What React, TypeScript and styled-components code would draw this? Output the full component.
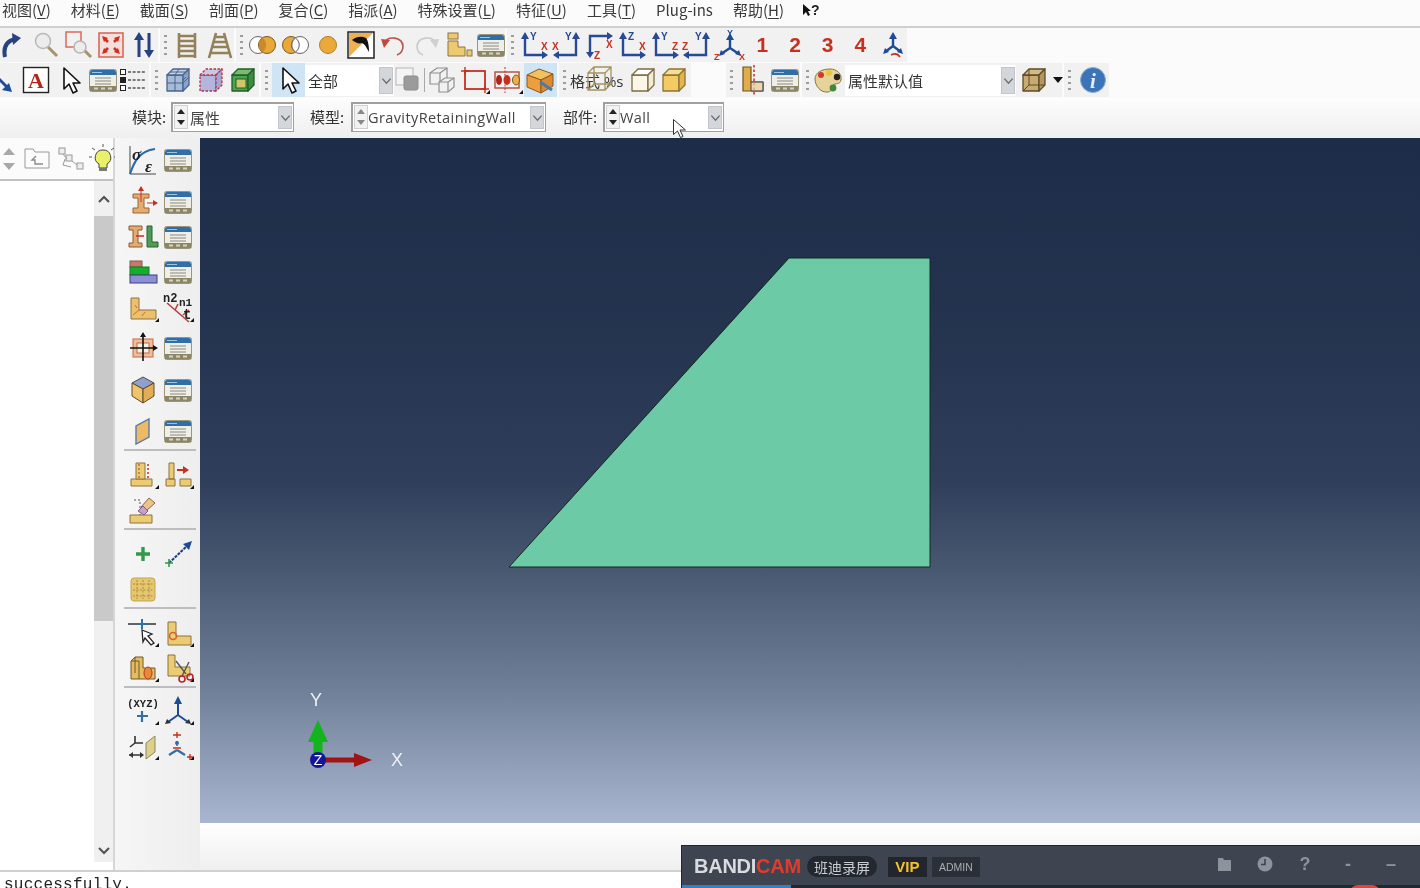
import React from "react";
import styled, { createGlobalStyle } from "styled-components";

const GlobalStyle = createGlobalStyle`
    html, body {
        margin: 0;
        padding: 0;
        background: #f4f4f4;
    }
    * {
        box-sizing: border-box;
    }
`;

const FONT = `"Open Sans", "Noto Sans CJK SC", sans-serif`;
const CJK = `"Noto Sans CJK SC", "Noto Sans", sans-serif`;

const Page = styled.div`
    position: relative;
    width: 1420px;
    height: 888px;
    overflow: hidden;
    display: flex;
    flex-direction: column;
    background: #f4f4f4;
    font-family: ${FONT};
    color: #333;
    filter: blur(0.4px);
`;

/* ---------- menu ---------- */
const MenuBar = styled.div`
    height: 28px;
    flex: none;
    display: flex;
    align-items: center;
    gap: 20px;
    padding: 0 0 6px 2px;
    background: #fbfbfb;
    border-bottom: 2px solid #cfcfcf;
`;

const MenuItem = styled.span`
    font-family: ${CJK};
    font-size: 15px;
    line-height: 20px;
    color: #3a3a3a;
    white-space: nowrap;
    u {
        text-underline-offset: 2px;
    }
`;

const HelpCursor = styled.span`
    display: flex;
    align-items: center;
    margin-left: -2px;
    font: bold 14px "Liberation Sans", sans-serif;
    color: #222;
`;

/* ---------- toolbars ---------- */
const ToolRow = styled.div<{ $shift?: number }>`
    height: 35px;
    flex: none;
    display: flex;
    margin-left: ${(p) => p.$shift || 0}px;
    background: #fbfbfb;
`;

const Group = styled.div<{ $width: number }>`
    position: relative;
    width: ${(p) => p.$width}px;
    flex: none;
    display: flex;
    align-items: center;
    height: 34px;
    background: #f1f1f1;
    border-right: 2px solid #fbfbfb;
`;

const Grip = styled.div`
    width: 8px;
    height: 24px;
    flex: none;
    margin-left: 3px;
    background-image: radial-gradient(circle, #9c9c9c 1.2px, transparent 1.4px);
    background-size: 5px 6px;
    background-repeat: repeat-y;
    background-position: 0 0;
`;

const GapSpace = styled.div<{ $w: number }>`
    width: ${(p) => p.$w}px;
    flex: none;
`;

const Tool = styled.div<{ $w?: number; $active?: boolean; $flyout?: boolean }>`
    position: relative;
    width: ${(p) => p.$w || 32.6}px;
    height: 34px;
    flex: none;
    display: flex;
    align-items: center;
    justify-content: center;
    background: ${(p) => (p.$active ? "#cfe4f5" : "transparent")};
    ${(p) =>
        p.$flyout &&
        `&::after {
            content: "";
            position: absolute;
            right: 1px;
            bottom: 3px;
            border-left: 4px solid transparent;
            border-bottom: 4px solid #111;
        }`}
`;

const IconSvg = styled.svg`
    display: block;
    flex: none;
`;

const NumberTool = styled.span`
    font: bold 21px "Liberation Sans", sans-serif;
    color: #c5301f;
`;

const ThinRule = styled.div`
    width: 1px;
    height: 24px;
    flex: none;
    margin: 0 1px;
    background: #a8a8a8;
`;

const Combo = styled.div<{ $w: number; $left?: number }>`
    width: ${(p) => p.$w}px;
    height: 31px;
    flex: none;
    margin-left: ${(p) => p.$left || 0}px;
    display: flex;
    align-items: center;
    padding-left: 3px;
    background: #fff;
    font-family: ${CJK};
    font-size: 15px;
    color: #333;
`;

const ComboLabel = styled.span`
    flex: 1;
    white-space: nowrap;
`;

const Chevron = styled.div`
    width: 14px;
    align-self: stretch;
    flex: none;
    margin: 2px 1px;
    display: flex;
    align-items: center;
    justify-content: center;
    background: #d3d6da;
    border: 1px solid #c2c5c9;
`;

const FormatText = styled.span`
    position: relative;
    width: 57px;
    flex: none;
    font-family: ${FONT};
    font-size: 15px;
    white-space: nowrap;
    color: #333;
`;

const FormatGhost = styled.span`
    position: absolute;
    left: 13px;
    top: -7px;
`;

/* ---------- module bar ---------- */
const ModuleBar = styled.div`
    height: 40px;
    flex: none;
    display: flex;
    align-items: center;
    padding: 0 0 3px 132px;
    background: linear-gradient(#fdfdfd, #efefef);
`;

const ModuleLabel = styled.span<{ $w: number }>`
    width: ${(p) => p.$w}px;
    flex: none;
    font-family: ${CJK};
    font-size: 15px;
    color: #333;
    white-space: nowrap;
`;

const ModuleCombo = styled.div<{ $w: number; $gap: number }>`
    width: ${(p) => p.$w}px;
    height: 30px;
    flex: none;
    margin-right: ${(p) => p.$gap}px;
    display: flex;
    align-items: center;
    background: #fff;
    border: 2px solid #a0a0a0;
    border-right-width: 1px;
    border-bottom-width: 1px;
`;

const Spin = styled.div`
    width: 14px;
    height: 24px;
    flex: none;
    margin: 0 2px 0 1px;
    display: flex;
    flex-direction: column;
    justify-content: space-between;
    align-items: center;
    padding: 3px 0;
    background: #f2f2f2;
    border: 1px solid #d0d0d0;
`;

const SpinUp = styled.i<{ $dim?: boolean }>`
    border: 4px solid transparent;
    border-top: 0;
    border-bottom: 5px solid ${(p) => (p.$dim ? "#888" : "#222")};
`;

const SpinDown = styled(SpinUp)`
    border-bottom: 0;
    border-top: 5px solid ${(p) => (p.$dim ? "#888" : "#222")};
`;

const ComboValue = styled.span<{ $latin?: boolean }>`
    flex: 1;
    margin-left: ${(p) => (p.$latin ? "-2px" : "0")};
    font-family: ${(p) => (p.$latin ? FONT : CJK)};
    font-size: ${(p) => (p.$latin ? "14.5px" : "15px")};
    letter-spacing: ${(p) => (p.$latin ? "0.4px" : "0")};
    color: #444;
    white-space: nowrap;
`;

/* ---------- main ---------- */
const Main = styled.div`
    flex: 1;
    min-height: 0;
    display: flex;
`;

const LeftPanel = styled.div`
    width: 115px;
    flex: none;
    display: flex;
    flex-direction: column;
    background: #fff;
    border-right: 2px solid #d6d6d6;
`;

const TreeStrip = styled.div`
    height: 43px;
    flex: none;
    display: flex;
    align-items: center;
    gap: 1px;
    background: #fbfbfb;
    border-bottom: 2px solid #c2c2c2;
`;

const StripIcon = styled.div<{ $w: number }>`
    width: ${(p) => p.$w}px;
    flex: none;
    display: flex;
    justify-content: center;
`;

const TreeBody = styled.div`
    flex: 1;
    min-height: 0;
    display: flex;
    justify-content: flex-end;
    margin-bottom: 8px;
    background: #fff;
`;

const ScrollBar = styled.div`
    width: 19px;
    flex: none;
    display: flex;
    flex-direction: column;
    background: #f0f0f0;
`;

const ScrollButton = styled.div<{ $h: number }>`
    height: ${(p) => p.$h}px;
    flex: none;
    display: flex;
    align-items: center;
    justify-content: center;
`;

const ScrollThumb = styled.div`
    height: 405px;
    flex: none;
    background: #c9c9c9;
`;

const ScrollRest = styled.div`
    flex: 1;
`;

const ToolColumn = styled.div`
    width: 85px;
    flex: none;
    display: flex;
    flex-direction: column;
    padding: 4px 0 0 10px;
    background: linear-gradient(90deg, #f6f6f6, #eeeeee);
`;

const ColRow = styled.div<{ $top?: number }>`
    display: flex;
    height: 35px;
    flex: none;
    margin-top: ${(p) => p.$top || 0}px;
`;

const ColTool = styled(Tool)`
    width: 35px;
    height: 35px;
`;

const ColRule = styled.div<{ $bottom: number }>`
    height: 2px;
    flex: none;
    width: 72px;
    margin: 1px 0 ${(p) => p.$bottom}px -1px;
    background: #bdbdbd;
`;

const Workspace = styled.div`
    flex: 1;
    min-width: 0;
    display: flex;
    flex-direction: column;
`;

const Viewport = styled.div`
    position: relative;
    height: 685px;
    flex: none;
    background: linear-gradient(
        #1d2c48 0%,
        #25344f 30%,
        #2f3f5b 50%,
        #46566f 62%,
        #6f7e97 80%,
        #a9b6cf 100%
    );
`;

const CanvasSvg = styled.svg`
    position: absolute;
    inset: 0;
    width: 100%;
    height: 100%;
`;

const PromptArea = styled.div`
    flex: 1;
    background: linear-gradient(#ffffff, #efefef);
`;

const MessageArea = styled.div`
    height: 18px;
    flex: none;
    padding-left: 4px;
    border-top: 2px solid #d0d0d0;
    background: #fff;
    font-family: "Liberation Mono", monospace;
    font-size: 16px;
    line-height: 26px;
    letter-spacing: 0.25px;
    color: #222;
    overflow: hidden;
`;

/* ---------- recorder overlay ---------- */
const Recorder = styled.div`
    position: absolute;
    left: 681px;
    right: 0;
    top: 845px;
    bottom: 0;
    display: flex;
    flex-direction: column;
    background: #3e4551;
    border-top: 1px solid #23262c;
    border-left: 1px solid #23262c;
`;

const RecorderTop = styled.div`
    flex: 1;
    display: flex;
    align-items: center;
    padding: 2px 21px 0 12px;
`;

const Brand = styled.span`
    font: bold 20px "Liberation Sans", sans-serif;
    letter-spacing: -0.25px;
    color: #d9dbde;
    em {
        font-style: normal;
        color: #e5392c;
    }
`;

const BrandPill = styled.span`
    margin-left: 6px;
    padding: 0 7px;
    height: 21px;
    display: flex;
    align-items: center;
    border-radius: 11px;
    background: #23272f;
    font-family: ${CJK};
    font-size: 14px;
    color: #c9ccd0;
`;

const VipBadge = styled.span`
    margin-left: 11px;
    width: 39px;
    height: 20px;
    display: flex;
    align-items: center;
    justify-content: center;
    background: #22252b;
    font: bold 15px "Liberation Sans", sans-serif;
    color: #f2c22e;
`;

const AdminBadge = styled.span`
    margin-left: 5px;
    width: 48px;
    height: 20px;
    display: flex;
    align-items: center;
    justify-content: center;
    background: #2a2f38;
    font: 10.5px "Liberation Sans", sans-serif;
    color: #a9adb4;
`;

const RecorderActions = styled.div`
    margin: -5px 0 0 auto;
    display: flex;
    align-items: center;
    gap: 24px;
    color: #8d939c;
`;

const RecorderGlyph = styled.span<{ $w?: number }>`
    width: ${(p) => p.$w || 16}px;
    display: flex;
    justify-content: center;
    font: bold 18px "Liberation Sans", sans-serif;
    color: #8d939c;
`;

const RecorderStrip = styled.div`
    position: relative;
    height: 3px;
    flex: none;
    background: #23272e;
`;

const StripBlue = styled.div`
    position: absolute;
    left: 0;
    top: 0;
    bottom: 0;
    width: 109px;
    background: #2f82c8;
`;

const StripDot = styled.div`
    position: absolute;
    left: 668px;
    top: 0;
    width: 30px;
    height: 8px;
    border-radius: 15px 15px 0 0;
    background: #e2453f;
`;

const MouseCursor = styled.svg`
    position: absolute;
    left: 672px;
    top: 118px;
`;

/* ---------- drawings ---------- */
const Table = (
    <>
        <rect x="2.5" y="5.5" width="27" height="22" rx="2" fill="#efefe8" stroke="#9a9478" />
        <path d="M3 8a2 2 0 0 1 2-2h22a2 2 0 0 1 2 2v3H3z" fill="#2f6ea6" />
        <path d="M5 8.5h10" stroke="#9cc3e0" />
        <rect x="3" y="22" width="26" height="5" fill="#8c8668" />
        <path d="M8 14h16M8 17h16M8 20h16" stroke="#8a8a80" />
        <path d="M7 24.5h4M14 24.5h4M21 24.5h4" stroke="#d5d2c0" strokeWidth="2" />
    </>
);

const AXIS = "#274a94";

function Axes({ kind, a, b, aColor = "#c5301f", bColor = "#c5301f" }: { kind: string; a: string; b: string; aColor?: string; bColor?: string }) {
    const text = { fontFamily: "Liberation Sans, sans-serif", fontSize: 10, fontWeight: 700 };
    return (
        <IconSvg width={32} height={32} viewBox="0 0 32 32">
            <g stroke={AXIS} strokeWidth="2.4" fill="none">
                {kind === "ur" && <path d="M7 9V26H26" />}
                {kind === "ul" && <path d="M25 9V26H6" />}
                {kind === "dr" && <path d="M7 24V7H26" />}
            </g>
            <g fill={AXIS}>
                {kind === "ur" && <path d="M7 3l4 7H3zM30 26l-6 4v-8z" />}
                {kind === "ul" && <path d="M25 3l4 7h-8zM2 26l6-4v8z" />}
                {kind === "dr" && <path d="M7 29l-4-6h8zM30 7l-6 4V3z" />}
            </g>
            {kind === "ur" && (
                <>
                    <text x="12" y="11" {...text} fill={aColor}>{a}</text>
                    <text x="23" y="21" {...text} fill={bColor}>{b}</text>
                </>
            )}
            {kind === "ul" && (
                <>
                    <text x="14" y="11" {...text} fill={aColor}>{a}</text>
                    <text x="1" y="21" {...text} fill={bColor}>{b}</text>
                </>
            )}
            {kind === "dr" && (
                <>
                    <text x="11" y="30" {...text} fill={aColor}>{a}</text>
                    <text x="23" y="19" {...text} fill={bColor}>{b}</text>
                </>
            )}
        </IconSvg>
    );
}

const Cube = ({ face, top, side, line }: { face: string; top: string; side: string; line: string }) => (
    <g stroke={line} strokeWidth="1.3" strokeLinejoin="round">
        <path d="M5 11h16v16H5z" fill={face} />
        <path d="M5 11l6-6h16l-6 6z" fill={top} />
        <path d="M21 11l6-6v16l-6 6z" fill={side} />
    </g>
);

const ICONS: Record<string, React.ReactNode> = {
    rotate: (
        <>
            <path d="M8 28C6 18 10 12 18 10" stroke="#27427f" strokeWidth="4" fill="none" />
            <path d="M15 4l9 5-8 7z" fill="#27427f" />
        </>
    ),
    zoom: (
        <>
            <path d="M18 18l9 9" stroke="#a59468" strokeWidth="3" />
            <circle cx="13" cy="12" r="7.5" fill="#ececec" stroke="#b8b8b8" strokeWidth="1.5" />
        </>
    ),
    boxzoom: (
        <>
            <rect x="4" y="3" width="15" height="15" fill="none" stroke="#d8695c" strokeWidth="1.5" />
            <path d="M22 21l7 7" stroke="#a59468" strokeWidth="3" />
            <circle cx="18" cy="18" r="6" fill="#ececec" stroke="#b5b5b5" strokeWidth="1.5" />
        </>
    ),
    fit: (
        <>
            <rect x="4" y="4" width="24" height="24" fill="#f5dfda" stroke="#d8695c" strokeWidth="1.6" />
            <path d="M7 7l6 2-4 4zM25 7l-2 6-4-4zM7 25l2-6 4 4zM25 25l-6-2 4-4z" fill="#cf2f20" />
            <path d="M9 9l4 4M23 9l-4 4M9 23l4-4M23 23l-4-4" stroke="#cf2f20" strokeWidth="2.6" />
        </>
    ),
    updown: (
        <>
            <path d="M11 28V9M21 4v19" stroke="#27427f" strokeWidth="3" />
            <path d="M11 3l5 8H6zM21 29l-5-8h10z" fill="#27427f" />
        </>
    ),
    ladder: <path d="M8 4v25M24 4v25M8 7h16M8 12h16M8 17h16M8 22h16M8 27h16" stroke="#93815a" strokeWidth="2.6" fill="none" />,
    trestle: <path d="M12 4L5 29M20 4l7 25M11 8h10M10 13h12M9 18h14M7 24h18" stroke="#93815a" strokeWidth="2.6" fill="none" />,
    circL: (
        <>
            <circle cx="11" cy="16" r="8.5" fill="#fff" stroke="#666" />
            <circle cx="20" cy="16" r="8.5" fill="#e9a93a" stroke="#7a5a20" />
            <path d="M15.5 9a8.5 8.5 0 0 1 0 14 8.5 8.5 0 0 1 0-14z" fill="#c98a2a" />
        </>
    ),
    circM: (
        <>
            <circle cx="11" cy="16" r="8.5" fill="#e9a93a" stroke="#7a5a20" />
            <circle cx="20" cy="16" r="8.5" fill="#fff" fillOpacity=".9" stroke="#666" />
            <path d="M15.5 9a8.5 8.5 0 0 1 0 14 8.5 8.5 0 0 1 0-14z" fill="#fbfbfb" stroke="#666" />
        </>
    ),
    circR: <circle cx="16" cy="16" r="8.5" fill="#eba93a" stroke="#b0802c" />,
    hammer: (
        <>
            <rect x="3" y="3" width="26" height="26" fill="#fff" stroke="#222" strokeWidth="1.5" />
            <path d="M4 4h24L4 28z" fill="#eeb053" />
            <path d="M7 11c5-4 10-4 14-2 2 2 3 8 3 14-3-5-4-8-7-9-3 1-6 0-10-3z" fill="#111" />
        </>
    ),
    undo: (
        <>
            <path d="M6 14c4-8 18-6 19 3 0 5-3 8-6 9" fill="none" stroke="#b6564a" strokeWidth="1.6" />
            <path d="M3 10l9 1-6 8z" fill="#c1483a" />
        </>
    ),
    redo: (
        <>
            <path d="M26 14c-4-8-18-6-19 3 0 5 3 8 6 9" fill="none" stroke="#c9c9c9" strokeWidth="1.6" />
            <path d="M29 10l-9 1 6 8z" fill="#cfcfcf" />
        </>
    ),
    parts: (
        <>
            <rect x="5" y="4" width="10" height="6" fill="#edca71" stroke="#8a7440" />
            <path d="M5 12h10v6h7v9H5z" fill="#edca71" stroke="#8a7440" />
            <rect x="24" y="21" width="5" height="6" fill="#edca71" stroke="#8a7440" />
        </>
    ),
    table: Table,
    arrowDiag: (
        <>
            <path d="M4 10l14 14" stroke="#1f4b96" strokeWidth="3" />
            <path d="M22 28l-10-2 7-7z" fill="#1f4b96" />
        </>
    ),
    textA: (
        <>
            <rect x="3.5" y="3.5" width="25" height="25" fill="#fff" stroke="#222" strokeWidth="1.4" />
            <text x="16" y="24" textAnchor="middle" fontFamily="Liberation Serif, serif" fontWeight="700" fontSize="22" fill="#b3261b">A</text>
        </>
    ),
    cursor: <path d="M10 4v21l5-5 4 9 4-2-4-8h7z" fill="#fff" stroke="#111" strokeWidth="1.6" strokeLinejoin="round" />,
    listdash: (
        <>
            <path d="M11 8h17M11 16h17M11 24h17" stroke="#555" strokeDasharray="3 1.6" strokeWidth="1.4" />
            <rect x="3.5" y="5.5" width="5" height="5" fill="#fff" stroke="#222" />
            <rect x="3" y="13" width="6" height="6" fill="#222" />
            <rect x="3.5" y="21.5" width="5" height="5" fill="#fff" stroke="#222" />
        </>
    ),
    meshCube: (
        <>
            <Cube face="#a5bbd8" top="#c5d3e6" side="#8aa3c6" line="#48648f" />
            <path d="M5 19h16M13 11v16M8 8h16M17 5l-4 6M24 13l-3 3M27 13l-6 6" stroke="#48648f" fill="none" />
        </>
    ),
    dashCube: (
        <g strokeDasharray="2.5 1.5">
            <Cube face="#b4b5dc" top="#c9c7e6" side="#a5a5d2" line="#b0324a" />
        </g>
    ),
    greenCube: (
        <>
            <Cube face="#4aa64e" top="#77bd6f" side="#3e8c42" line="#245c28" />
            <rect x="9" y="15" width="10" height="9" fill="#d3c66a" stroke="#245c28" />
        </>
    ),
    layers: (
        <>
            <rect x="3" y="4" width="17" height="17" fill="#f4f4f4" stroke="#b5b5b5" />
            <rect x="11" y="12" width="14" height="14" rx="2" fill="#9b9b9b" stroke="#8c8c8c" />
        </>
    ),
    wireCube: (
        <g fill="none" stroke="#8f8f8f" strokeWidth="1.2">
            <path d="M4 9l7-5h10v11l-7 5H4z" />
            <path d="M4 9h10v11M14 9l7-5" />
            <path d="M13 18l6-4h9v9l-6 5h-9z" fill="#f1f1f1" />
            <path d="M13 18h9v10M22 18l6-4" />
        </g>
    ),
    selRect: (
        <>
            <rect x="6" y="7" width="20" height="18" fill="none" stroke="#c5301f" strokeWidth="1.8" />
            <path d="M6 3v8M2 7h8M26 21v8M22 25h8" stroke="#c5301f" strokeWidth="1.4" />
        </>
    ),
    selNodes: (
        <>
            <rect x="4" y="8" width="24" height="16" fill="none" stroke="#b04a3e" strokeWidth="1.4" />
            <path d="M14 3v26" stroke="#c5301f" strokeDasharray="2 1.5" />
            <ellipse cx="8" cy="16" rx="3" ry="5" fill="#b2241a" />
            <ellipse cx="16" cy="16" rx="3.5" ry="5" fill="#c5301f" />
            <ellipse cx="25" cy="16" rx="3.5" ry="5" fill="#e9b04a" stroke="#7a5a20" />
        </>
    ),
    orangeCube: (
        <>
            <path d="M3 11l12-6 14 5-12 6z" fill="#f2c15f" stroke="#8a5a1c" />
            <path d="M3 11v12l14 6V16z" fill="#ee9f3d" stroke="#8a5a1c" />
            <path d="M17 16l12-6v12l-12 7z" fill="#d88a35" stroke="#8a5a1c" />
            <path d="M16 18l12 8" stroke="#4a7aa8" strokeWidth="3" />
        </>
    ),
    wireTan: (
        <g fill="none" stroke="#a3925f" strokeWidth="1.3">
            <path d="M5 10h17v17H5zM5 10l6-6h17v17l-6 6M22 10l6-6M11 4v17h17M11 21l-6 6" />
        </g>
    ),
    whiteCube: <Cube face="#fbf6e8" top="#fff" side="#f3ebd6" line="#7d6c42" />,
    yellowCube: <Cube face="#f3cb62" top="#f7de93" side="#e3b54b" line="#8c7434" />,
    sectionL: (
        <>
            <path d="M6 3h8v15h12v9H6z" fill="#e2ad48" stroke="#6e5420" strokeWidth="1.2" />
            <path d="M17 1v30" stroke="#c5301f" strokeDasharray="2.5 2" strokeWidth="1.5" />
            <path d="M14 18h12v9H14z" fill="#f1f1f1" fillOpacity=".6" stroke="#444" />
        </>
    ),
    palette: (
        <>
            <path d="M3 15c0-7 8-10 15-10s12 5 11 11c-1 5-6 3-8 5-2 3 0 6-5 7C9 29 3 22 3 15z" fill="#e7d29a" stroke="#8a7440" />
            <circle cx="9" cy="11" r="3" fill="#cf3a2a" />
            <circle cx="17" cy="9" r="3" fill="#eac53a" />
            <circle cx="25" cy="13" r="3.2" fill="#222" />
            <circle cx="21" cy="24" r="3.4" fill="#3f8a3a" />
        </>
    ),
    tanWire: (
        <>
            <Cube face="#c7ab72" top="#d3bb88" side="#b4975f" line="#5e4b25" />
            <path d="M11 5v16H27M11 21l-6 6" stroke="#5e4b25" fill="none" />
        </>
    ),
    info: (
        <>
            <circle cx="16" cy="16" r="12.5" fill="#3b74b8" stroke="#8fa9c9" />
            <text x="16" y="24" textAnchor="middle" fontFamily="Liberation Serif, serif" fontStyle="italic" fontWeight="700" fontSize="21" fill="#e8eef7">i</text>
        </>
    ),
    stress: (
        <>
            <path d="M3 2v28h26" fill="none" stroke="#444" />
            <path d="M3 30C7 18 12 7 28 5" fill="none" stroke="#2a68a8" strokeWidth="2" />
            <text x="5" y="16" fontFamily="Liberation Serif, serif" fontStyle="italic" fontWeight="700" fontSize="17" fill="#222">σ</text>
            <text x="18" y="28" fontFamily="Liberation Serif, serif" fontStyle="italic" fontWeight="700" fontSize="17" fill="#222">ε</text>
        </>
    ),
    ibeam: (
        <>
            <path d="M6 8h16v4h-5v10h5v5H6v-5h5V12H6z" fill="#e6ab72" stroke="#9a6332" />
            <path d="M14 2v14M20 17h9" stroke="#c5301f" />
            <path d="M14 0l3 5h-6zM31 17l-5-3v6z" fill="#c5301f" />
        </>
    ),
    ibeamL: (
        <>
            <path d="M2 5h13v4h-4v13h4v4H2v-4h4V9H2z" fill="#e6ab72" stroke="#8a5a2c" />
            <path d="M20 5h5v16h6v5H20z" fill="#4f9a55" stroke="#2a6030" />
            <path d="M9 15h8" stroke="#c5301f" strokeWidth="1.5" />
        </>
    ),
    stack: (
        <>
            <rect x="3" y="5" width="12" height="6" fill="#c87a66" stroke="#7a5a50" />
            <rect x="3" y="11" width="19" height="8" fill="#12b02a" stroke="#197a25" />
            <rect x="3" y="19" width="27" height="8" fill="#8c8fd6" stroke="#3a3f80" />
        </>
    ),
    lshape: (
        <>
            <path d="M4 6h8v12h17v9H4z" fill="#ecc16e" stroke="#8a7440" />
            <path d="M6 23l6-5M15 24l3-4M8 13l2 3" stroke="#cf6b35" />
        </>
    ),
    n2n1t: (
        <>
            <path d="M5 11l22 19" stroke="#b7413a" strokeWidth="1.6" />
            <path d="M13 18l3-6M21 23l6-5" stroke="#b7413a" strokeWidth="1.6" />
            <text x="1" y="10" fontFamily="Liberation Mono, monospace" fontWeight="700" fontSize="12" fill="#222">n2</text>
            <text x="17" y="14" fontFamily="Liberation Mono, monospace" fontWeight="700" fontSize="11" fill="#222">n1</text>
            <text x="21" y="27" fontFamily="Liberation Mono, monospace" fontWeight="700" fontSize="14" fill="#222">t</text>
        </>
    ),
    crossSection: (
        <>
            <rect x="6" y="7" width="20" height="18" fill="#ecbfa0" stroke="#c4683e" />
            <rect x="10" y="11" width="12" height="10" fill="#f4f0e8" stroke="#c4683e" />
            <path d="M16 3v26M3 16h25" stroke="#111" strokeWidth="1.6" />
            <path d="M16 0l3 5h-6zM31 16l-5-3v6z" fill="#111" />
        </>
    ),
    cube3: (
        <>
            <path d="M16 3L5 9l11 6 11-6z" fill="#8e9fd0" stroke="#5a4a2a" />
            <path d="M5 9v13l11 7V15z" fill="#f0c46c" stroke="#5a4a2a" />
            <path d="M27 9v13l-11 7V15z" fill="#e4ad55" stroke="#5a4a2a" />
        </>
    ),
    plate: <path d="M22 4v18L9 29V11z" fill="#edbb66" stroke="#5c7aa6" strokeWidth="1.4" />,
    wall1: (
        <>
            <path d="M4 20h21v7H4z" fill="#eccb72" stroke="#8a7440" />
            <path d="M9 4h9v16H9z" fill="#eccb72" stroke="#8a7440" />
            <path d="M12 5v14" stroke="#c5301f" strokeDasharray="2 2" />
            <path d="M21 5v15" stroke="#c5301f" strokeDasharray="2 2" strokeWidth="1.5" />
        </>
    ),
    wall2: (
        <>
            <path d="M4 20h9v7H4zM7 4h5v16H7z" fill="#eccb72" stroke="#8a7440" />
            <path d="M18 20h11v7H18z" fill="#eccb72" stroke="#8a7440" />
            <path d="M15 11h8" stroke="#c5301f" strokeWidth="2" />
            <path d="M27 11l-6-4v8z" fill="#c5301f" />
        </>
    ),
    eraser: (
        <>
            <path d="M3 21h22v8H3z" fill="#eccb72" stroke="#8a7440" />
            <path d="M7 6h6v15" fill="none" stroke="#555" strokeDasharray="2 2" />
            <path d="M14 13l8-9 6 5-9 8z" fill="#eec28c" stroke="#8a6a3c" />
            <path d="M11 17l5-5 5 5-4 4z" fill="#c9a0cc" stroke="#7a5a80" />
        </>
    ),
    plus: <path d="M16 9v14M9 16h14" stroke="#2f9a4a" strokeWidth="3.4" />,
    dimension: (
        <>
            <path d="M7 25L27 6" stroke="#1d3d7c" strokeWidth="2" strokeDasharray="3 1" />
            <path d="M30 3l-3 9-6-6z" fill="#1f4b96" />
            <path d="M3 25h8M7 21v8" stroke="#2f9a4a" strokeWidth="1.6" />
        </>
    ),
    grid: (
        <>
            <rect x="4" y="5" width="24" height="23" rx="3" fill="#e6c66e" stroke="#c0a552" />
            <path d="M10 7v19M16 7v19M22 7v19M6 11h20M6 17h20M6 23h20" stroke="#a88a3c" strokeDasharray="2 1.5" />
        </>
    ),
    pickCursor: (
        <>
            <path d="M1 7h10M19 7h10" stroke="#333" strokeWidth="1.5" />
            <path d="M15 2v10M10 7h10" stroke="#2f6ea6" strokeWidth="2" />
            <path d="M15 13l10 4-4 2 6 7-3 2-6-7-2 4z" fill="#fff" stroke="#222" strokeWidth="1.3" />
        </>
    ),
    lcorner: (
        <>
            <path d="M6 5h8v14h15v9H6z" fill="#eccb72" stroke="#8a7440" />
            <circle cx="11" cy="19" r="3.5" fill="none" stroke="#d8602a" strokeWidth="1.6" />
        </>
    ),
    blockHole: (
        <>
            <path d="M4 9l4-4h8v11h12v11H4z" fill="#e6bc5e" stroke="#6e5a28" />
            <path d="M4 9h8v18M8 5v16" stroke="#6e5a28" fill="none" />
            <ellipse cx="21" cy="21" rx="4" ry="6" fill="#e28c3a" stroke="#c5301f" />
        </>
    ),
    scissorL: (
        <>
            <path d="M6 3h7v12h15v9H6z" fill="#eccb72" stroke="#8a7440" />
            <path d="M14 9l10 13M27 10l-7 14" stroke="#555" strokeWidth="1.4" />
            <circle cx="20" cy="27" r="3" fill="none" stroke="#b5242a" strokeWidth="1.6" />
            <circle cx="28" cy="25" r="3" fill="none" stroke="#b5242a" strokeWidth="1.6" />
        </>
    ),
    xyz: (
        <>
            <text x="16" y="12" textAnchor="middle" fontFamily="Liberation Mono, monospace" fontWeight="700" fontSize="10.5" fill="#222">(XYZ)</text>
            <path d="M15 16v11M10 21h11" stroke="#2f6ea6" strokeWidth="2.2" />
        </>
    ),
    tripod: (
        <>
            <path d="M16 5v15M16 20l-10 7M16 20l10 7" stroke="#1f4b96" strokeWidth="2" fill="none" />
            <path d="M16 1l4 8h-8z" fill="#1f4b96" />
            <path d="M3 29l2-5 4 4zM29 29l-2-5-4 4z" fill="#333" />
        </>
    ),
    axisPlate: (
        <>
            <path d="M28 6v16l-9 7V13z" fill="#dfcf8a" stroke="#8a8a5a" />
            <path d="M8 6v7M8 13l-5 4M8 13h8M2 25h14" stroke="#333" strokeWidth="1.6" fill="none" />
            <path d="M2 25l4-3v6zM17 25l-4-3v6z" fill="#333" />
        </>
    ),
    tripod2: (
        <>
            <path d="M15 2v6M11 5h8M15 11v5" stroke="#c5301f" strokeWidth="1.4" />
            <circle cx="15" cy="13" r="2" fill="#2f6ea6" />
            <path d="M15 20L7 25M15 20l8 5" stroke="#2f6ea6" strokeWidth="2.2" />
            <path d="M11 18h8M25 27h6M28 24v6" stroke="#c5301f" strokeWidth="1.4" />
        </>
    ),
    folderUp: (
        <>
            <path d="M4 6h8l2 3h14v16H4z" fill="#fbfbfb" stroke="#9a9a9a" />
            <path d="M15 13l-4 4h3v4h8" fill="none" stroke="#8c8c8c" strokeWidth="1.4" />
        </>
    ),
    treeNet: (
        <g fill="#eee" stroke="#9a9a9a">
            <rect x="4" y="5" width="6" height="6" />
            <rect x="11" y="12" width="6" height="6" />
            <rect x="22" y="20" width="6" height="6" />
            <path d="M8 11l4 5M10 16l-2 6 8 2M17 18l5 4" fill="none" />
        </g>
    ),
    bulb: (
        <>
            <path d="M16 7a7.5 7.5 0 0 0-4 14v4h8v-4a7.5 7.5 0 0 0-4-14z" fill="#e9f06a" stroke="#444" />
            <path d="M12 25h8v3h-8z" fill="#777" />
            <path d="M16 1v3M5 5l3 2M27 5l-3 2M2 14h3M27 14h3" stroke="#555" />
        </>
    ),
};

const Ic = ({ n }: { n: string }) => (
    <IconSvg width={32} height={32} viewBox="0 0 32 32">
        {ICONS[n]}
    </IconSvg>
);

const ChevronMark = ({ size = 11 }: { size?: number }) => (
    <svg width={size} height={size} viewBox="0 0 12 12">
        <path d="M1.5 4L6 9l4.5-5" fill="none" stroke="#6a6a6a" strokeWidth="1.4" />
    </svg>
);

const ScrollArrow = ({ up }: { up?: boolean }) => (
    <svg width="14" height="10" viewBox="0 0 14 10">
        <path d={up ? "M2 8l5-5 5 5" : "M2 2l5 5 5-5"} fill="none" stroke="#555" strokeWidth="2.2" />
    </svg>
);

const ModuleField = ({ label, labelW, value, w, gap, latin, dimSpin }: { label: string; labelW: number; value: string; w: number; gap: number; latin?: boolean; dimSpin?: boolean }) => (
    <>
        <ModuleLabel $w={labelW}>{label}</ModuleLabel>
        <ModuleCombo $w={w} $gap={gap}>
            <Spin>
                <SpinUp $dim={dimSpin} />
                <SpinDown $dim={dimSpin} />
            </Spin>
            <ComboValue $latin={latin}>{value}</ComboValue>
            <Chevron>
                <ChevronMark />
            </Chevron>
        </ModuleCombo>
    </>
);

const COLUMN: (number | [string, string, number?, boolean?, boolean?])[] = [
    ["stress", "table", 0],
    ["ibeam", "table", 7],
    ["ibeamL", "table", 0],
    ["stack", "table", 0],
    ["lshape", "n2n1t", 1, true, true],
    ["crossSection", "table", 5],
    ["cube3", "table", 7],
    ["plate", "table", 6],
    6,
    ["wall1", "wall2", 0, true, true],
    ["eraser", "", 0],
    6,
    ["plus", "dimension", 0],
    ["grid", "", 0],
    6,
    ["pickCursor", "lcorner", 0, true, true],
    ["blockHole", "scissorL", 0, true, true],
    5,
    ["xyz", "tripod", 0, true, true],
    ["axisPlate", "tripod2", 0, true, true],
];

export default function App() {
    return (
        <Page>
            <GlobalStyle />
            <MenuBar>
                <MenuItem>视图(<u>V</u>)</MenuItem>
                <MenuItem>材料(<u>E</u>)</MenuItem>
                <MenuItem>截面(<u>S</u>)</MenuItem>
                <MenuItem>剖面(<u>P</u>)</MenuItem>
                <MenuItem>复合(<u>C</u>)</MenuItem>
                <MenuItem>指派(<u>A</u>)</MenuItem>
                <MenuItem>特殊设置(<u>L</u>)</MenuItem>
                <MenuItem>特征(<u>U</u>)</MenuItem>
                <MenuItem>工具(<u>T</u>)</MenuItem>
                <MenuItem>Plu<u>g</u>-ins</MenuItem>
                <MenuItem>帮助(<u>H</u>)</MenuItem>
                <HelpCursor>
                    <svg width="9" height="14" viewBox="0 0 9 14">
                        <path d="M1 1v11l3-3 2 4 2-1-2-4h3z" fill="#111" />
                    </svg>
                    ?
                </HelpCursor>
            </MenuBar>

            <ToolRow $shift={-3}>
                <Group $width={163}>
                    <Tool><Ic n="rotate" /></Tool>
                    <Tool><Ic n="zoom" /></Tool>
                    <Tool><Ic n="boxzoom" /></Tool>
                    <Tool><Ic n="fit" /></Tool>
                    <Tool><Ic n="updown" /></Tool>
                </Group>
                <Group $width={76}>
                    <Grip />
                    <Tool><Ic n="ladder" /></Tool>
                    <Tool><Ic n="trestle" /></Tool>
                </Group>
                <Group $width={271}>
                    <Grip />
                    <Tool><Ic n="circL" /></Tool>
                    <Tool><Ic n="circM" /></Tool>
                    <Tool><Ic n="circR" /></Tool>
                    <Tool><Ic n="hammer" /></Tool>
                    <Tool><Ic n="undo" /></Tool>
                    <Tool><Ic n="redo" /></Tool>
                    <Tool><Ic n="parts" /></Tool>
                    <Tool><Ic n="table" /></Tool>
                </Group>
                <Group $width={402}>
                    <Grip />
                    <Tool><Axes kind="ur" a="Y" b="X" aColor={AXIS} /></Tool>
                    <Tool><Axes kind="ul" a="Y" b="X" aColor={AXIS} /></Tool>
                    <Tool><Axes kind="dr" a="Z" b="X" /></Tool>
                    <Tool><Axes kind="ur" a="Z" b="X" aColor={AXIS} /></Tool>
                    <Tool><Axes kind="ur" a="Y" b="Z" aColor={AXIS} /></Tool>
                    <Tool><Axes kind="ul" a="Y" b="Z" aColor={AXIS} /></Tool>
                    <Tool>
                        <IconSvg width={32} height={32} viewBox="0 0 32 32">
                            <path d="M16 8v11M16 19l-9 6M16 19l9 6" stroke="#1f4b96" strokeWidth="2.4" fill="none" />
                            <path d="M16 4l4 7h-8zM5 27l2-6 4 4zM27 27l-2-6-4 4z" fill="#1f4b96" />
                            <text x="13" y="7" fontSize="9" fontFamily="Liberation Sans, sans-serif" fontWeight="700" fill="#1f4b96">Y</text>
                            <text x="0" y="31" fontSize="9" fontFamily="Liberation Sans, sans-serif" fontWeight="700" fill="#c5301f">Z</text>
                            <text x="25" y="31" fontSize="9" fontFamily="Liberation Sans, sans-serif" fontWeight="700" fill="#c5301f">X</text>
                        </IconSvg>
                    </Tool>
                    <Tool><NumberTool>1</NumberTool></Tool>
                    <Tool><NumberTool>2</NumberTool></Tool>
                    <Tool><NumberTool>3</NumberTool></Tool>
                    <Tool><NumberTool>4</NumberTool></Tool>
                    <Tool>
                        <IconSvg width={32} height={32} viewBox="0 0 32 32">
                            <path d="M16 8v9M16 17l-8 6M16 17l8 6" stroke="#1f4b96" strokeWidth="2.4" fill="none" />
                            <path d="M16 3l4 7h-8zM6 25l2-6 4 4zM26 25l-2-6-4 4z" fill="#1f4b96" />
                            <path d="M14 26c4-2 7-1 9 2" stroke="#c5301f" strokeWidth="1.6" fill="none" />
                        </IconSvg>
                    </Tool>
                </Group>
            </ToolRow>

            <ToolRow $shift={-8}>
                <Group $width={159}>
                    <Tool $w={28}><Ic n="arrowDiag" /></Tool>
                    <Tool><Ic n="textA" /></Tool>
                    <Tool $w={34}><Ic n="cursor" /></Tool>
                    <Tool><Ic n="table" /></Tool>
                    <Tool $w={28}><Ic n="listdash" /></Tool>
                </Group>
                <Group $width={110}>
                    <Grip />
                    <Tool><Ic n="meshCube" /></Tool>
                    <Tool><Ic n="dashCube" /></Tool>
                    <Tool><Ic n="greenCube" /></Tool>
                </Group>
                <Group $width={298}>
                    <Grip />
                    <Tool $w={33} $active><Ic n="cursor" /></Tool>
                    <Combo $w={89}>
                        <ComboLabel>全部</ComboLabel>
                        <Chevron><ChevronMark /></Chevron>
                    </Combo>
                    <Tool $w={29}><Ic n="layers" /></Tool>
                    <ThinRule />
                    <Tool><Ic n="wireCube" /></Tool>
                    <Tool $flyout><Ic n="selRect" /></Tool>
                    <Tool $flyout><Ic n="selNodes" /></Tool>
                    <Tool $w={33} $active><Ic n="orangeCube" /></Tool>
                </Group>
                <Group $width={134}>
                    <Grip />
                    <FormatText>
                        格式 %s
                        <FormatGhost><Ic n="wireTan" /></FormatGhost>
                    </FormatText>
                    <Tool $w={32}><Ic n="whiteCube" /></Tool>
                    <Tool $w={30}><Ic n="yellowCube" /></Tool>
                </Group>
                <GapSpace $w={33} />
                <Group $width={76}>
                    <Grip />
                    <Tool $w={32}><Ic n="sectionL" /></Tool>
                    <Tool $w={32}><Ic n="table" /></Tool>
                </Group>
                <Group $width={262}>
                    <Grip />
                    <Tool $w={30}><Ic n="palette" /></Tool>
                    <Combo $w={171} $left={2}>
                        <ComboLabel>属性默认值</ComboLabel>
                        <Chevron><ChevronMark /></Chevron>
                    </Combo>
                    <Tool $w={36}><Ic n="tanWire" /></Tool>
                    <Tool $w={12}>
                        <svg width="10" height="6" viewBox="0 0 10 6">
                            <path d="M0 0h10L5 6z" fill="#111" />
                        </svg>
                    </Tool>
                </Group>
                <Group $width={47}>
                    <Grip />
                    <Tool $w={36}><Ic n="info" /></Tool>
                </Group>
            </ToolRow>

            <ModuleBar>
                <ModuleField label="模块:" labelW={39} value="属性" w={123} gap={16} />
                <ModuleField label="模型:" labelW={41} value="GravityRetainingWall" w={195} gap={17} latin dimSpin />
                <ModuleField label="部件:" labelW={40} value="Wall" w={121} gap={0} latin />
            </ModuleBar>

            <Main>
                <LeftPanel>
                    <TreeStrip>
                        <StripIcon $w={17}>
                            <svg width="14" height="26" viewBox="0 0 14 26">
                                <path d="M1 9l6-7 6 7zM1 17l6 7 6-7z" fill="#a8a8a8" />
                            </svg>
                        </StripIcon>
                        <StripIcon $w={37}><Ic n="folderUp" /></StripIcon>
                        <StripIcon $w={29}><Ic n="treeNet" /></StripIcon>
                        <StripIcon $w={33}><Ic n="bulb" /></StripIcon>
                    </TreeStrip>
                    <TreeBody>
                        <ScrollBar>
                            <ScrollButton $h={35}><ScrollArrow up /></ScrollButton>
                            <ScrollThumb />
                            <ScrollRest />
                            <ScrollButton $h={22}><ScrollArrow /></ScrollButton>
                        </ScrollBar>
                    </TreeBody>
                </LeftPanel>

                <ToolColumn>
                    {COLUMN.map((row, i) =>
                        typeof row === "number" ? (
                            <ColRule key={i} $bottom={row} />
                        ) : (
                            <ColRow key={i} $top={row[2]}>
                                <ColTool $flyout={row[3]}>{row[0] && <Ic n={row[0]} />}</ColTool>
                                <ColTool $flyout={row[4]}>{row[1] && <Ic n={row[1]} />}</ColTool>
                            </ColRow>
                        )
                    )}
                </ToolColumn>

                <Workspace>
                    <Viewport>
                        <CanvasSvg viewBox="0 0 1220 685">
                            <polygon points="309,429 589,120 730,120 730,429" fill="#6ccba6" stroke="#16261f" strokeWidth="1" />
                            <rect x="113.5" y="604" width="9" height="18" fill="#12b51e" />
                            <path d="M108 604l10-22 10 22z" fill="#12b51e" />
                            <rect x="122" y="619.5" width="35" height="5" fill="#a11414" />
                            <path d="M172 622l-18-7v14z" fill="#a11414" />
                            <circle cx="118" cy="622" r="8" fill="#15159a" />
                            <text x="118" y="627" textAnchor="middle" fontSize="14" fontFamily="Liberation Sans, sans-serif" fill="#fff">Z</text>
                            <text x="116" y="568" textAnchor="middle" fontSize="18" fontFamily="Liberation Sans, sans-serif" fill="#eef1f6">Y</text>
                            <text x="197" y="628" textAnchor="middle" fontSize="18" fontFamily="Liberation Sans, sans-serif" fill="#eef1f6">X</text>
                        </CanvasSvg>
                    </Viewport>
                    <PromptArea />
                </Workspace>
            </Main>

            <MessageArea>successfully.</MessageArea>

            <MouseCursor width="16" height="22" viewBox="0 0 16 22">
                <path d="M1.5 1.5v15l4-3.5 3 6.5 2.5-1-3-6.5h5.5z" fill="#fff" stroke="#333" strokeWidth="1" />
            </MouseCursor>

            <Recorder>
                <RecorderTop>
                    <Brand>BANDI<em>CAM</em></Brand>
                    <BrandPill>班迪录屏</BrandPill>
                    <VipBadge>VIP</VipBadge>
                    <AdminBadge>ADMIN</AdminBadge>
                    <RecorderActions>
                        <svg width="16" height="16" viewBox="0 0 16 16">
                            <path d="M1 2h5l1 2h7v11H1z" fill="#8d939c" />
                        </svg>
                        <svg width="16" height="16" viewBox="0 0 16 16">
                            <circle cx="8" cy="8" r="7.5" fill="#8d939c" />
                            <path d="M8 3v5.5H4" fill="none" stroke="#3e4551" strokeWidth="1.6" />
                        </svg>
                        <RecorderGlyph>?</RecorderGlyph>
                        <RecorderGlyph $w={22}>-</RecorderGlyph>
                        <RecorderGlyph>–</RecorderGlyph>
                    </RecorderActions>
                </RecorderTop>
                <RecorderStrip>
                    <StripBlue />
                    <StripDot />
                </RecorderStrip>
            </Recorder>
        </Page>
    );
}
